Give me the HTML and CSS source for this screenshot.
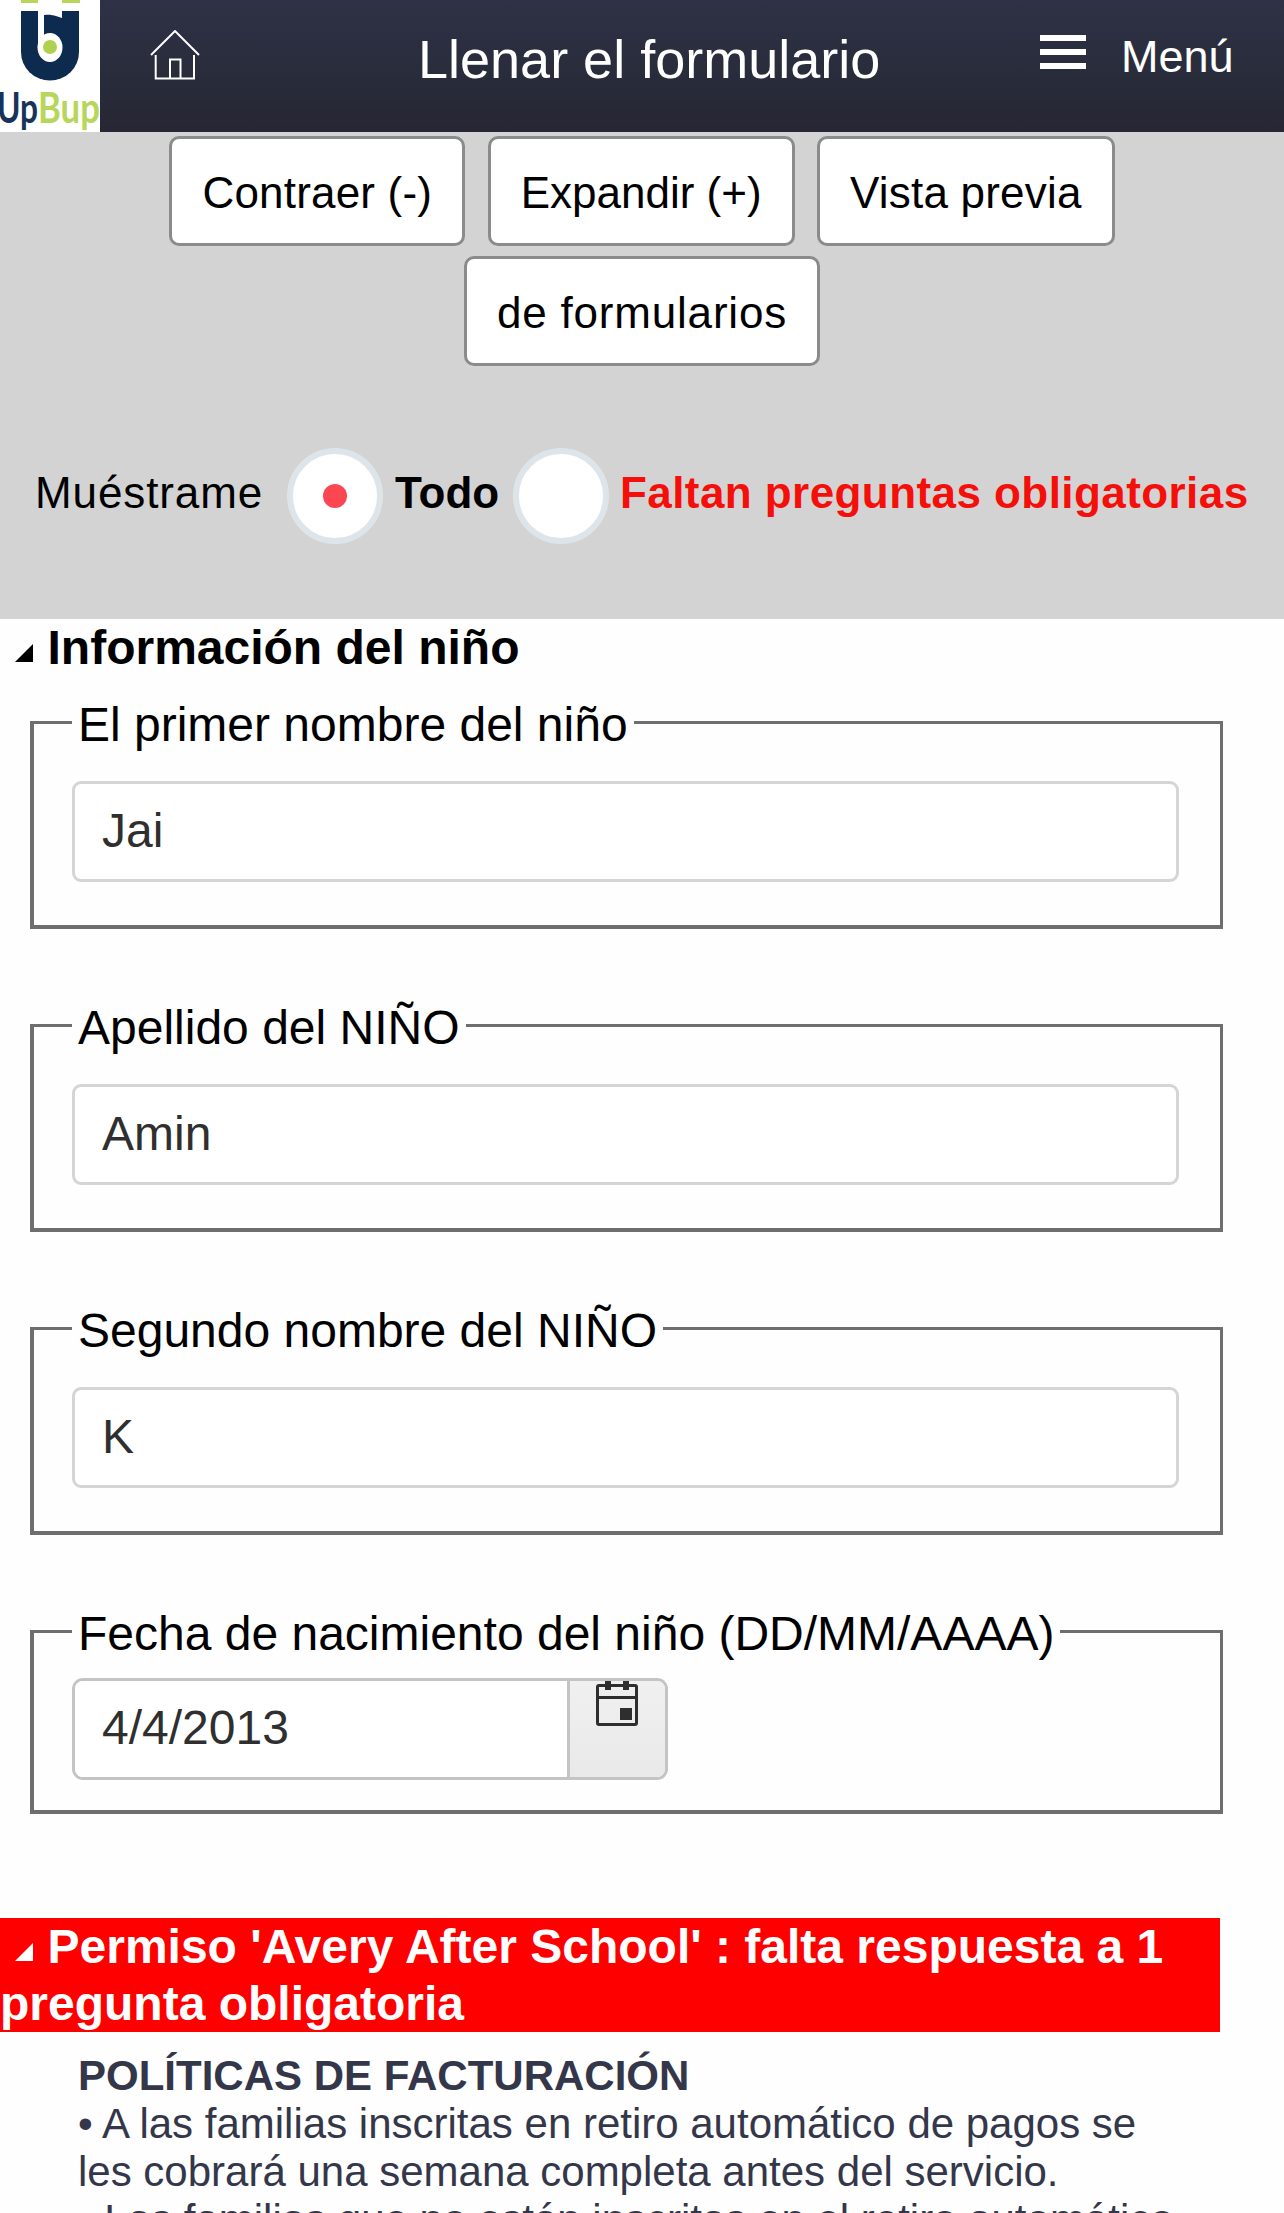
FILE: index.html
```html
<!DOCTYPE html>
<html lang="es">
<head>
    <meta charset="UTF-8">
    <meta name="viewport" content="width=device-width, initial-scale=1.0">
    <title>Llenar el formulario</title>
    <link rel="stylesheet" href="styles.css">
</head>
<body>
    <header class="navbar">
        <svg class="logo" width="100" height="132" viewBox="0 0 100 132">
            <rect width="100" height="132" fill="#fff"/>
            <path d="M21 0h17v3H21zM62 0h18v3H62z" fill="#b7d65b"/>
            <path d="M21 11h58v41a29 28.5 0 0 1-58 0z" fill="#0d2a4f"/>
            <path d="M38 11h24v7c-5-1-8-4-18-3v34h-6z" fill="#fff"/>
            <ellipse cx="50" cy="47.500" rx="12.500" ry="14.500" fill="#fff"/>
            <circle cx="50" cy="47" r="7" fill="#b1d14e"/>
            <text class="logo-text" x="-3" y="123" textLength="41" lengthAdjust="spacingAndGlyphs" fill="#17335a">Up</text>
            <text class="logo-text" x="38" y="123" textLength="62" lengthAdjust="spacingAndGlyphs" fill="#b7d65b">Bup</text>
        </svg>
        <a class="home-link" href="#">
            <svg width="50" height="50" viewBox="0 0 50 50" fill="none" stroke="#fff" stroke-width="2">
                <path d="M1 25L25 1l24 24"/>
                <path d="M5.700 25v23.500H44V25M20 48V29.500h10.500V48"/>
            </svg>
        </a>
        <h1 class="title">Llenar el formulario</h1>
        <a class="menu-link" href="#">
            <span class="menu-icon"><i></i><i></i><i></i></span>
            <span>Menú</span>
        </a>
    </header>

    <section class="toolbar">
        <div class="toolbar-buttons">
            <button class="btn">Contraer (-)</button>
            <button class="btn btn-expand">Expandir (+)</button>
            <button class="btn">Vista previa</button>
            <button class="btn btn-wide">de formularios</button>
        </div>
        <div class="filter">
            <span class="filter-label">Muéstrame</span>
            <span class="radio checked"></span>
            <b class="filter-all">Todo</b>
            <span class="radio"></span>
            <b class="filter-missing">Faltan preguntas obligatorias</b>
        </div>
    </section>

    <main class="form">
        <h2 class="section-title"><span class="arrow"></span>Información del niño</h2>

        <fieldset class="field">
            <legend>El primer nombre del niño</legend>
            <input class="input" type="text" value="Jai">
        </fieldset>
        <fieldset class="field">
            <legend>Apellido del NIÑO</legend>
            <input class="input" type="text" value="Amin">
        </fieldset>
        <fieldset class="field">
            <legend>Segundo nombre del NIÑO</legend>
            <input class="input" type="text" value="K">
        </fieldset>
        <fieldset class="field field-date">
            <legend>Fecha de nacimiento del niño (DD/MM/AAAA)</legend>
            <div class="datepicker">
                <input class="date-input" type="text" value="4/4/2013">
                <span class="date-button">
                    <svg width="42" height="45" viewBox="0 0 42 45">
                        <rect x="1.500" y="4.500" width="39" height="39" rx="1.500" fill="none" stroke="#2e2e2e" stroke-width="3"/>
                        <path d="M0 15h42v3H0zM9 0h6v9H9zM27 0h6v9h-6zM24 27h12v12H24z" fill="#2e2e2e"/>
                    </svg>
                </span>
            </div>
        </fieldset>

        <h2 class="section-title missing"><span class="arrow"></span>Permiso 'Avery After School' : falta respuesta a 1 pregunta obligatoria</h2>

        <div class="policies">
            <b>POLÍTICAS DE FACTURACIÓN</b><br>
            • A las familias inscritas en retiro automático de pagos se<br>
            les cobrará una semana completa antes del servicio.<br>
            • Las familias que no están inscritas en el retiro automático
        </div>
    </main>
</body>
</html>
```
FILE: styles.css
```css
* {
    margin: 0;
    padding: 0;
    box-sizing: border-box;
}

body {
    height: 2213px;
    overflow: hidden;
    background: #fefefe;
    color: #000;
    font-family: "Liberation Sans", Arial, sans-serif;
    font-size: 48px;
}

a {
    color: inherit;
    text-decoration: none;
}

.navbar {
    display: flex;
    align-items: flex-start;
    height: 132px;
    background: linear-gradient(#2f3146, #282c3a 60%, #272634);
    color: #fff;
}

.logo {
    display: block;
}

.logo-text {
    font-family: Lato, sans-serif;
    font-size: 42px;
    font-weight: 700;
}

.home-link {
    margin: 30px 0 0 50px;
    height: 50px;
}

.home-link svg {
    display: block;
}

.title {
    width: 462px;
    margin: 28px 0 0 218px;
    font-size: 54px;
    font-weight: 400;
    line-height: 62px;
    white-space: nowrap;
}

.menu-link {
    display: flex;
    margin: 31px 0 0 160px;
    font-size: 45px;
    line-height: 51px;
}

.menu-icon {
    display: flex;
    flex-direction: column;
    gap: 8px;
    width: 46px;
    margin: 4px 35px 0 0;
}

.menu-icon i {
    height: 6px;
    background: #fff;
}

.toolbar {
    height: 487px;
    padding-top: 4px;
    background: #d3d3d3;
}

.toolbar-buttons {
    display: flex;
    flex-wrap: wrap;
    justify-content: center;
    gap: 10px 22.500px;
    padding: 0 100px;
}

.btn {
    height: 110px;
    padding: 3px 30px 0;
    border: 3px solid #898b8d;
    border-radius: 10px;
    background: #fff;
    color: #000;
    font-family: inherit;
    font-size: 44px;
    letter-spacing: 0.200px;
}

.btn-expand {
    letter-spacing: 0;
}

.btn-wide {
    letter-spacing: 0.800px;
}

.filter {
    display: flex;
    align-items: center;
    height: 96px;
    margin-top: 82px;
    padding-left: 35px;
    font-size: 44px;
    white-space: nowrap;
}

.filter-label,
.filter-all,
.filter-missing {
    padding-bottom: 7px;
}

.filter-label {
    width: 252px;
    letter-spacing: 0.900px;
}

.radio {
    display: flex;
    align-items: center;
    justify-content: center;
    flex: none;
    width: 96px;
    height: 96px;
    border: 6px solid #dee5ea;
    border-radius: 50%;
    background: #fff;
}

.radio.checked::after {
    content: "";
    width: 24px;
    height: 24px;
    border-radius: 50%;
    background: #fc4652;
}

.filter-all {
    width: 118px;
    margin-left: 12px;
}

.filter-missing {
    margin-left: 11px;
    color: #f50f0a;
    letter-spacing: 0.430px;
}

.section-title {
    width: 1220px;
    font-size: 48px;
    line-height: 57px;
}

.arrow {
    display: inline-block;
    width: 18px;
    height: 18px;
    margin: 0 14.500px 0 15px;
    background: currentColor;
    clip-path: polygon(100% 0, 100% 100%, 0 100%);
    vertical-align: 2px;
}

.field {
    width: 1193px;
    margin: 18px 0 0 30px;
    padding: 30px 41px 43px 38px;
    border: solid #6e6e6e;
    border-width: 3px 3px 4px 4px;
}

.field + .field {
    margin-top: 68px;
}

.field legend {
    padding: 4px 6px 0;
    line-height: 53px;
}

.input {
    display: block;
    width: 100%;
    height: 101px;
    padding: 0 27px 3px;
    border: 3px solid #d5d5d5;
    border-radius: 9px;
    background: #fff;
    color: #2f2f2f;
    font-family: inherit;
    font-size: 48px;
}

.field-date {
    padding-top: 18px;
    padding-bottom: 30px;
}

.datepicker {
    display: flex;
    width: 596px;
    height: 102px;
    border: 3px solid #c4c4c4;
    border-radius: 11px;
    overflow: hidden;
}

.date-input {
    width: 492px;
    padding: 0 27px 3px;
    border: none;
    background: #fff;
    color: #2f2f2f;
    font-family: inherit;
    font-size: 48px;
}

.date-button {
    flex: 1;
    padding-left: 26px;
    border-left: 3px solid #c4c4c4;
    background: linear-gradient(#f0f0f0, #e9e9e9);
}

.date-button svg {
    display: block;
}

.section-title.missing {
    margin-top: 104px;
    background: #f00;
    color: #fff;
}

.policies {
    padding: 20px 0 0 78px;
    color: #34374a;
    font-size: 42px;
    line-height: 48px;
    white-space: nowrap;
}
```
